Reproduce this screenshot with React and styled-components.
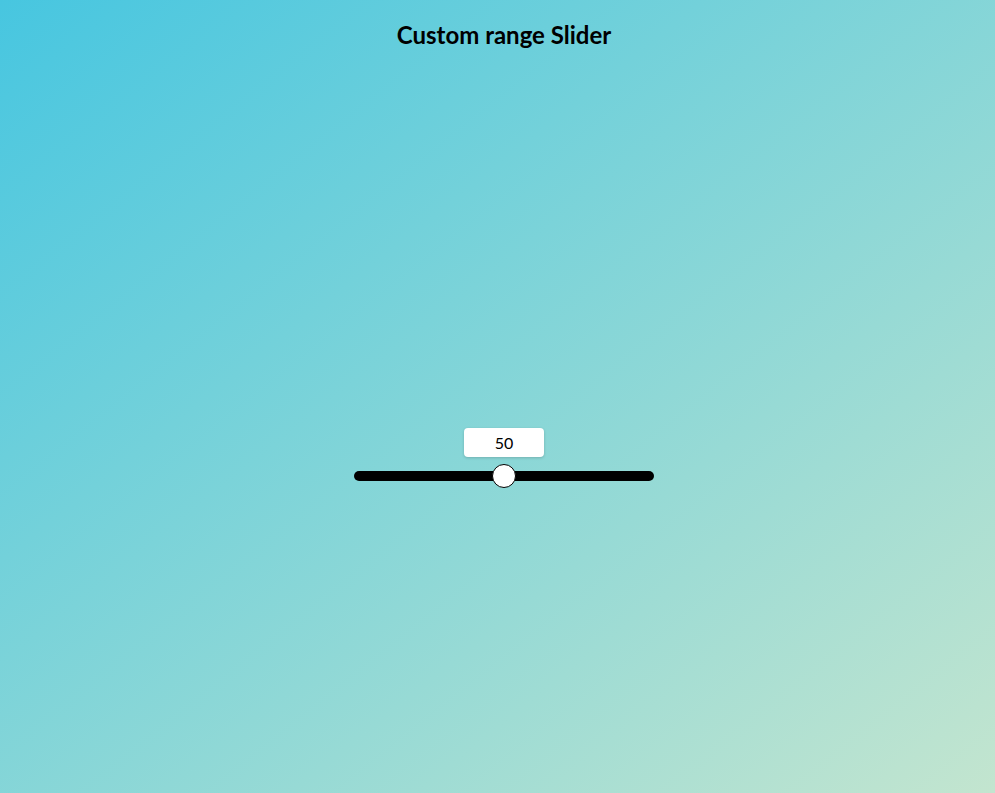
import React, {useState} from 'react'
import styled, {createGlobalStyle} from 'styled-components'

const GlobalStyle = createGlobalStyle`
  html, body {
    margin: 0;
    padding: 0;
  }
  body {
    font-family: Lato, "Open Sans", sans-serif;
  }
`

export default function App() {
  const [value, setValue] = useState(50)
  const thumb = 24
  const width = 300
  const left = thumb / 2 + (width - thumb) * value / 100

  return (
    <Page>
      <GlobalStyle />
      <Title>Custom range Slider</Title>
      <Stage>
        <RangeWrap>
          <ValueLabel style={{left: left + 'px'}}>{value}</ValueLabel>
          <Range
            type="range"
            min="0"
            max="100"
            value={value}
            onChange={e => setValue(Number(e.target.value))}
          />
        </RangeWrap>
      </Stage>
    </Page>
  )
}

const Page = styled.div`
  min-height: 100vh;
  box-sizing: border-box;
  padding: 20px 0 0 13px;
  display: flex;
  flex-direction: column;
  align-items: center;
  background: linear-gradient(to bottom right, #47c6e0 0%, #c3e5cf 100%);
`

const Title = styled.h2`
  margin: 0;
  font-size: 24px;
  line-height: 29px;
  font-weight: 700;
  color: #000;
`

const Stage = styled.div`
  padding-top: 422px;
`

const RangeWrap = styled.div`
  position: relative;
  width: 300px;
`

const ValueLabel = styled.div`
  position: absolute;
  bottom: 24px;
  width: 80px;
  height: 29px;
  transform: translateX(-50%);
  background: #fff;
  border-radius: 4px;
  box-shadow: 0 1px 3px rgba(0, 0, 0, 0.18);
  display: flex;
  align-items: center;
  justify-content: center;
  font-size: 16px;
  color: #000;
`

const Range = styled.input`
  -webkit-appearance: none;
  appearance: none;
  display: block;
  margin: 0;
  width: 300px;
  height: 10px;
  background: #000;
  border-radius: 5px;
  outline: none;

  &::-webkit-slider-thumb {
    -webkit-appearance: none;
    appearance: none;
    width: 24px;
    height: 24px;
    border-radius: 50%;
    background: #fff;
    border: 1px solid #000;
    box-sizing: border-box;
    cursor: pointer;
  }
`
